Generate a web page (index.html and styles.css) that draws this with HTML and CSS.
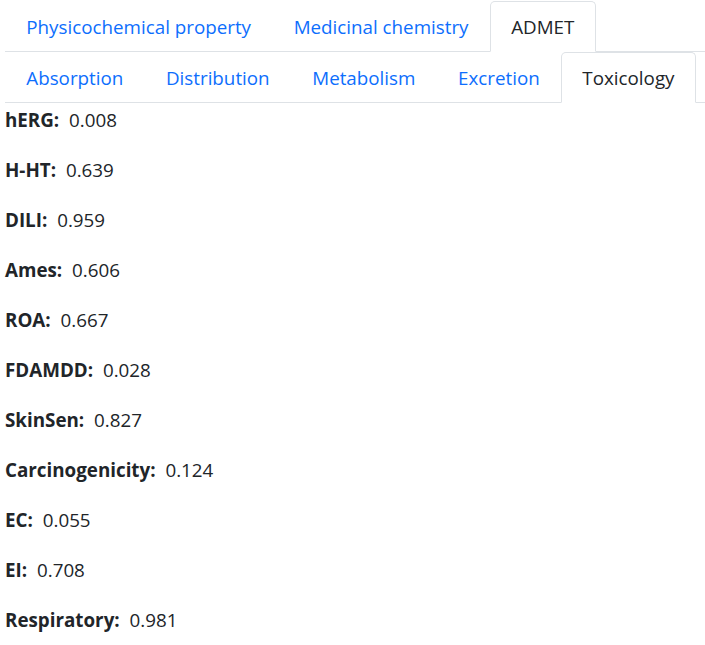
FILE: index.html
```html
<!DOCTYPE html>
<html>
<head>
  <link rel="stylesheet" href="styles.css">
</head>
<body>
  <div class="page">
    <ul class="nav-tabs">
      <li><a class="nav-link" href="#">Physicochemical property</a></li>
      <li><a class="nav-link" href="#">Medicinal chemistry</a></li>
      <li><a class="nav-link active" href="#">ADMET</a></li>
    </ul>
    <ul class="nav-tabs">
      <li><a class="nav-link" href="#">Absorption</a></li>
      <li><a class="nav-link" href="#">Distribution</a></li>
      <li><a class="nav-link" href="#">Metabolism</a></li>
      <li><a class="nav-link" href="#">Excretion</a></li>
      <li><a class="nav-link active" href="#">Toxicology</a></li>
    </ul>

    <div class="tab-content">
      <p class="prop"><span class="prop-name">hERG:</span> 0.008</p>
      <p class="prop"><span class="prop-name">H-HT:</span> 0.639</p>
      <p class="prop"><span class="prop-name">DILI:</span> 0.959</p>
      <p class="prop"><span class="prop-name">Ames:</span> 0.606</p>
      <p class="prop"><span class="prop-name">ROA:</span> 0.667</p>
      <p class="prop"><span class="prop-name">FDAMDD:</span> 0.028</p>
      <p class="prop"><span class="prop-name">SkinSen:</span> 0.827</p>
      <p class="prop"><span class="prop-name">Carcinogenicity:</span> 0.124</p>
      <p class="prop"><span class="prop-name">EC:</span> 0.055</p>
      <p class="prop"><span class="prop-name">EI:</span> 0.708</p>
      <p class="prop"><span class="prop-name">Respiratory:</span> 0.981</p>
    </div>
  </div>
</body>
</html>
```
FILE: styles.css
```css
body {
  margin: 0;
  font-family: "Open Sans", sans-serif;
  font-size: 18.8px;
  color: #212529;
  background: #fff;
}

.page {
  padding: 1px 0 0 5px;
}

.nav-tabs {
  display: flex;
  margin: 0;
  padding: 0;
  list-style: none;
  border-bottom: 1px solid #dee2e6;
}

.nav-link {
  display: block;
  margin-bottom: -1px;
  padding: 11px 20.3px 9px;
  line-height: 29px;
  color: #0d6efd;
  text-decoration: none;
  border: 1px solid transparent;
  border-top-left-radius: 5px;
  border-top-right-radius: 5px;
}

.nav-link.active {
  color: #212529;
  background-color: #fff;
  border-color: #dee2e6 #dee2e6 #fff;
}

.tab-content {
  padding-top: 2px;
}

.prop {
  margin: 0 0 20px;
  line-height: 30px;
}

.prop-name {
  font-weight: bold;
  margin-right: 5px;
}
```
